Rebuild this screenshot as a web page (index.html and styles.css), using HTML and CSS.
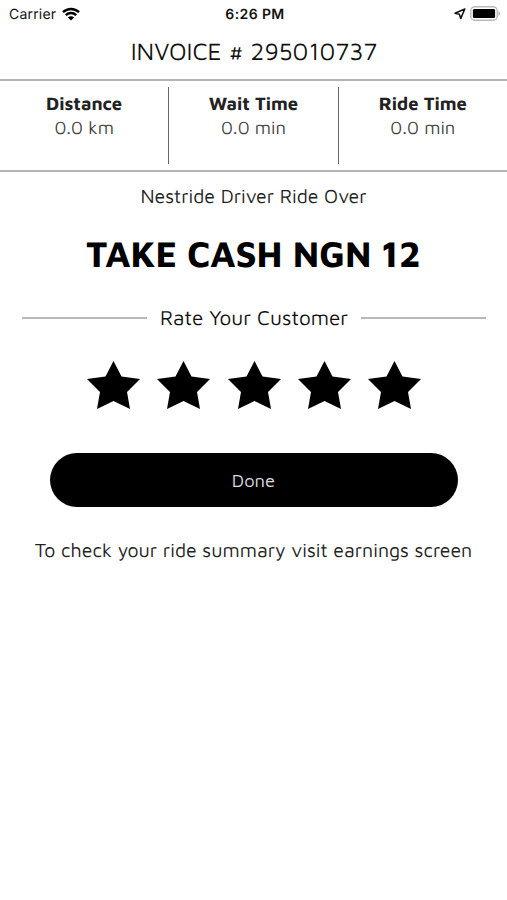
FILE: index.html
```html
<!DOCTYPE html>
<html lang="en">
<head>
    <meta charset="UTF-8">
    <meta name="viewport" content="width=device-width, initial-scale=1.0">
    <title>Invoice</title>
    <link rel="stylesheet" href="styles.css">
</head>
<body>
    <svg class="defs" width="0" height="0">
        <symbol id="star" viewBox="0 0 53 48">
            <path d="M26.5 0 L34.5 15.5 L53 18 L40 31 L43 48 L26.5 40 L10 48 L13 31 L0 18 L18.5 15.5 Z"/>
        </symbol>
    </svg>

    <div class="status-bar">
        <div class="status-left">
            <span class="carrier">Carrier</span>
            <svg class="wifi" width="18" height="14" viewBox="0 0 18 14" fill="none" stroke="#000" stroke-width="2.5">
                <path d="M1 5.1 C5.5 0.8 12.5 0.8 17 5.1"/>
                <path d="M3.8 8.2 C6.8 5.4 11.2 5.4 14.2 8.2"/>
                <path d="M9 13.6 L5.9 10.5 C7.7 8.9 10.3 8.9 12.1 10.5 Z" fill="#000" stroke="none"/>
            </svg>
        </div>
        <span class="clock">6:26 PM</span>
        <div class="status-right">
            <svg class="location" width="12" height="12" viewBox="0 0 12 12" fill="none" stroke="#111" stroke-width="1.5" stroke-linejoin="round">
                <path d="M10.8 1 L1 5.2 L5.4 6.2 L6.7 10.6 Z"/>
            </svg>
            <svg class="battery" width="31" height="15" viewBox="0 0 31 15">
                <rect x="0.8" y="0.8" width="26.4" height="13.4" rx="4" fill="#fff" stroke="#bbb" stroke-width="1.4"/>
                <rect x="2.9" y="2.9" width="22.2" height="9.2" rx="1.5" fill="#000"/>
                <path d="M28.4 5 C30.8 6 30.8 9 28.4 10 Z" fill="#bbb"/>
            </svg>
        </div>
    </div>

    <h1 class="invoice">INVOICE # 295010737</h1>

    <div class="stats">
        <div class="stat">
            <div class="stat-label">Distance</div>
            <div class="stat-value">0.0 km</div>
        </div>
        <div class="stat">
            <div class="stat-label">Wait Time</div>
            <div class="stat-value">0.0 min</div>
        </div>
        <div class="stat">
            <div class="stat-label">Ride Time</div>
            <div class="stat-value">0.0 min</div>
        </div>
    </div>

    <p class="message">Nestride Driver Ride Over</p>
    <h2 class="amount">TAKE CASH NGN 12</h2>

    <div class="rate-title"><span>Rate Your Customer</span></div>
    <div class="stars">
        <svg class="star"><use href="#star"/></svg>
        <svg class="star"><use href="#star"/></svg>
        <svg class="star"><use href="#star"/></svg>
        <svg class="star"><use href="#star"/></svg>
        <svg class="star"><use href="#star"/></svg>
    </div>

    <button class="done" type="button">Done</button>
    <p class="note">To check your ride summary visit earnings screen</p>
</body>
</html>
```
FILE: styles.css
```css
* {
    box-sizing: border-box;
}

body {
    margin: 0;
    background: #fff;
    color: #111;
    font-family: "Maven Pro", "Noto Sans", sans-serif;
    text-align: center;
    text-rendering: geometricPrecision;
    white-space: nowrap;
}

.defs {
    display: block;
}

.status-bar {
    display: grid;
    grid-template-columns: 1fr auto 1fr;
    align-items: center;
    height: 27px;
    padding: 0 6px 0 9px;
    font-family: Inter, sans-serif;
    font-size: 14px;
}

.status-left,
.status-right {
    display: flex;
    align-items: center;
}

.status-left {
    gap: 6px;
}

.status-right {
    justify-content: flex-end;
    gap: 4px;
}

.carrier {
    padding-top: 1px;
    letter-spacing: 0.2px;
}

.clock {
    padding-top: 1px;
    font-weight: 600;
    letter-spacing: 0.4px;
}

.invoice {
    height: 52px;
    margin: 0;
    padding-left: 1px;
    font-size: 24.4px;
    font-weight: 300;
    line-height: 50px;
}

.stats {
    display: flex;
    height: 93px;
    padding: 6px 0;
    border-top: 2px solid #b4b4b4;
    border-bottom: 2px solid #b4b4b4;
}

.stat {
    flex: 1;
    padding-top: 4px;
}

.stat + .stat {
    border-left: 1px solid #666;
}

.stat-label {
    color: #222;
    font-size: 18.4px;
    font-weight: 700;
    line-height: 24px;
}

.stat-value {
    color: #444;
    font-size: 18.4px;
    font-weight: 300;
    line-height: 24px;
}

.message {
    margin: 12px 0 0;
    color: #222;
    font-size: 19.5px;
    line-height: 26px;
}

.amount {
    margin: 21px 0 0;
    color: #000;
    font-size: 36.6px;
    font-weight: 700;
    line-height: 46px;
}

.rate-title {
    display: flex;
    align-items: center;
    gap: 13px;
    height: 30px;
    margin: 26px 21px 0 22px;
    font-size: 20.7px;
}

.rate-title::before,
.rate-title::after {
    content: "";
    flex: 1;
    height: 2px;
    background: #b8b8b8;
}

.stars {
    display: flex;
    justify-content: center;
    gap: 17.3px;
    margin-top: 28px;
    padding-left: 1px;
}

.star {
    width: 53px;
    height: 48px;
}

.done {
    display: block;
    width: 408px;
    height: 54px;
    margin: 44px auto 0;
    padding: 0;
    border: none;
    border-radius: 27px;
    background: #000;
    color: #ddd;
    font: inherit;
    font-size: 18.4px;
}

.note {
    margin: 31px 0 0;
    color: #222;
    font-size: 19.5px;
    line-height: 26px;
}
```
